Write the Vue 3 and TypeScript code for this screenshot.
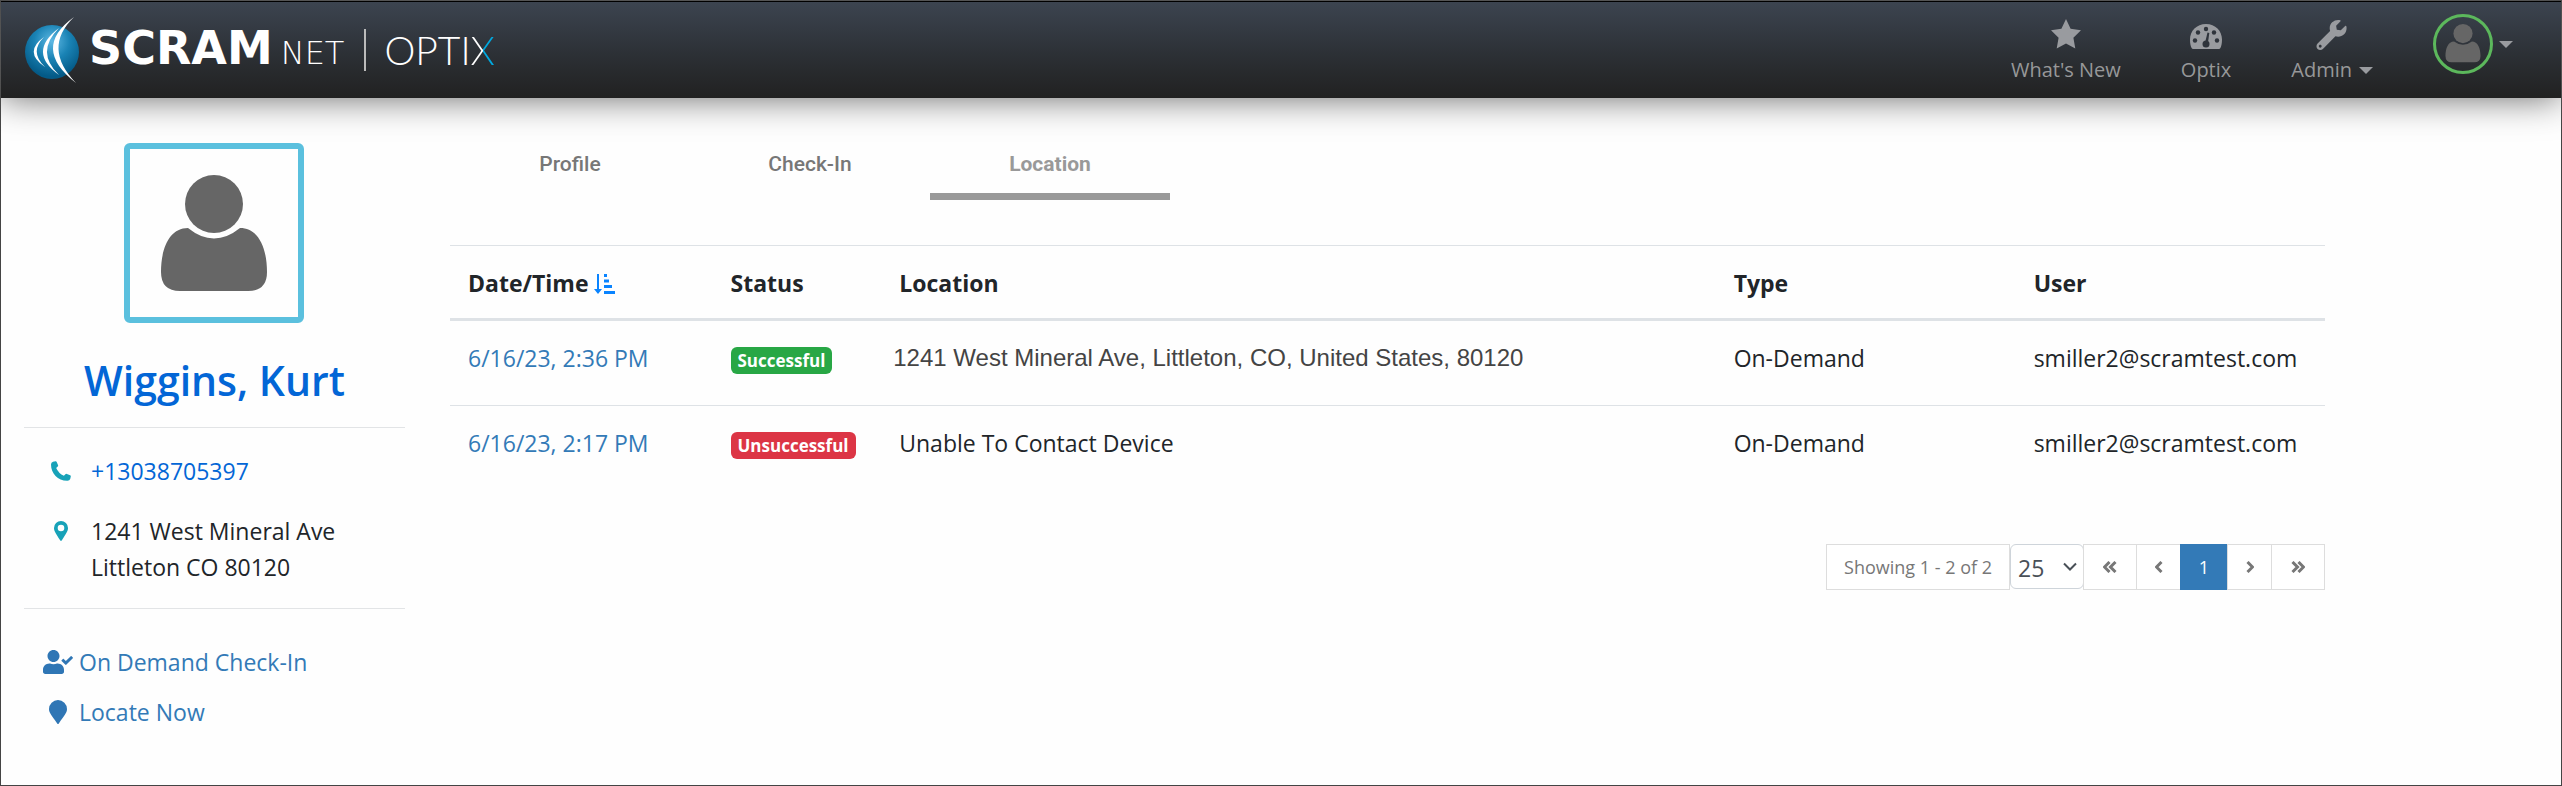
<script setup lang="ts">
import { ref } from 'vue'

interface CheckRow {
  when: string
  ok: boolean
  location: string
  type: string
  user: string
}

const tabs: string[] = ['Profile', 'Check-In', 'Location']
const activeTab = ref<string>('Location')
const pageSize = ref<string>('25')
const rows: CheckRow[] = [
  { when: '6/16/23, 2:36 PM', ok: true, location: '1241 West Mineral Ave, Littleton, CO, United States, 80120', type: 'On-Demand', user: 'smiller2@scramtest.com' },
  { when: '6/16/23, 2:17 PM', ok: false, location: 'Unable To Contact Device', type: 'On-Demand', user: 'smiller2@scramtest.com' },
]
</script>

<template>
  <div class="page">
    <header class="topbar">
      <a class="brand" href="#" aria-label="SCRAMNET Optix home">
        <svg class="globe" viewBox="0 0 54 72" aria-hidden="true">
          <defs>
            <radialGradient id="globeFill" cx="0.5" cy="0.3" r="0.65">
              <stop offset="0" stop-color="#5fb9e4" />
              <stop offset="0.5" stop-color="#1a83b5" />
              <stop offset="1" stop-color="#045a87" />
            </radialGradient>
          </defs>
          <circle cx="27" cy="38" r="27" fill="url(#globeFill)" />
          <path d="M19 23Q-2 38 20 53Q4 38 19 23z" fill="#fff" />
          <path d="M34 14Q2 38 34 61Q10 38 34 14z" fill="#fff" />
          <path d="M49 3Q6 34 51 69Q17 34 49 3z" fill="#fff" />
        </svg>
        <span class="brand-name"><span class="scram">SCRAM</span><span class="net">NET</span></span>
        <span class="brand-rule"></span>
        <span class="optix">OPTI<span class="optix-x">X</span></span>
      </a>
      <nav class="menu" aria-label="Main">
        <a class="menu-item" href="#">
          <svg width="32" height="32" viewBox="0 0 32 32" aria-hidden="true"><path d="M16 1l4.600 9.800 10.400 1.500-7.600 7.500 1.900 10.700L16 25.400l-9.300 5.100 1.900-10.700L1 12.300l10.400-1.500z" /></svg>
          <span>What's New</span>
        </a>
        <a class="menu-item" href="#">
          <svg width="34" height="32" viewBox="0 0 34 32" aria-hidden="true"><path d="M17 6C7.600 6 1 13 1 21.500c0 4 .6 6.500 1.600 8.500q.5 1 1.500 1h25.800q1 0 1.500-1c1-2 1.600-4.500 1.600-8.500C33 13 26.400 6 17 6z" /><g class="holes"><circle cx="17" cy="11" r="2.200" /><circle cx="9" cy="14.500" r="2.200" /><circle cx="25" cy="14.500" r="2.200" /><circle cx="6" cy="22.500" r="2.200" /><circle cx="28" cy="22.500" r="2.200" /><circle cx="17" cy="26" r="3.500" /><path d="M16 25l2.500-10.500 1.800.4-1.500 11z" /></g></svg>
          <span>Optix</span>
        </a>
        <button class="menu-item" type="button">
          <svg width="32" height="32" viewBox="0 -32 528 544" aria-hidden="true"><path d="M507.730 109.100c-2.240-9.030-13.540-12.090-20.120-5.510l-74.360 74.360-67.880-11.310-11.310-67.880 74.360-74.360c6.620-6.620 3.430-17.900-5.660-20.160-47.380-11.740-99.550.91-136.580 37.930-39.640 39.640-50.550 97.100-34.050 147.200L18.740 402.760c-24.990 24.990-24.990 65.510 0 90.500 24.990 24.990 65.510 24.990 90.500 0l213.210-213.210c50.120 16.710 107.470 5.680 147.370-34.220 37.070-37.070 49.700-89.320 37.910-136.730zM64 472c-13.250 0-24-10.750-24-24 0-13.260 10.750-24 24-24s24 10.740 24 24c0 13.250-10.750 24-24 24z" /></svg>
          <span class="with-caret">Admin <i class="caret"></i></span>
        </button>
        <button class="account" type="button" aria-label="Account">
          <span class="account-ring">
            <svg width="36" height="40" viewBox="0 0 106 121" aria-hidden="true"><circle cx="53" cy="29" r="29" /><path d="M26 53q27 20 54 0C98 53 106 74 106 97q0 19-19 19H19Q0 116 0 97C0 74 8 53 26 53z" /></svg>
          </span>
          <i class="caret"></i>
        </button>
      </nav>
    </header>

    <div class="body">
      <aside class="side">
        <div class="portrait">
          <svg width="106" height="116" viewBox="0 0 106 116" role="img" aria-label="No photo"><circle cx="53" cy="29" r="29" /><path d="M27 53q26 21 52 0C98 53 106 74 106 97q0 19-19 19H19Q0 116 0 97C0 74 8 53 27 53z" /></svg>
        </div>
        <h1><a href="#">Wiggins, Kurt</a></h1>
        <ul class="contact">
          <li>
            <svg width="20" height="20" viewBox="0 0 20 20" aria-hidden="true"><path d="M2 .7L4.400.2Q5.300 0 5.700.9L7.100 4.200Q7.400 5 6.700 5.600L5.200 6.900Q7.500 12.200 12.900 14.800L14.400 13.200Q15 12.500 15.900 12.900L19.100 14.300Q20 14.700 19.800 15.600L19.200 18Q18.600 19.800 16.500 19.800C7 20 0 12.500 0 3.500Q0 1.200 2 .7z" /></svg>
            <a href="#">+13038705397</a>
          </li>
          <li>
            <svg width="20" height="20" viewBox="0 0 20 20" aria-hidden="true"><path fill-rule="evenodd" d="M10 0a7 7 0 0 1 7 7c0 3-1.500 5-6.300 12.600q-.7.800-1.400 0C4.500 12 3 10 3 7a7 7 0 0 1 7-7zm0 3.700a3.300 3.300 0 1 0 0 6.600 3.300 3.300 0 0 0 0-6.600z" /></svg>
            <address>1241 West Mineral Ave<br>Littleton CO 80120</address>
          </li>
        </ul>
        <ul class="actions">
          <li>
            <a href="#">
              <svg width="30" height="24" viewBox="0 0 640 512" aria-hidden="true"><path d="M224 256c70.700 0 128-57.300 128-128S294.700 0 224 0 96 57.300 96 128s57.300 128 128 128zm89.600 32h-16.700c-22.200 10.200-46.900 16-72.900 16s-50.600-5.800-72.900-16h-16.700C60.200 288 0 348.200 0 422.400V464c0 26.500 21.500 48 48 48h352c26.500 0 48-21.500 48-48v-41.600c0-74.200-60.200-134.400-134.400-134.400zm323-128.400l-27.800-28.100c-4.600-4.700-12.100-4.700-16.800-.1l-104.800 104-45.500-45.800c-4.600-4.700-12.100-4.700-16.800-.1l-28.100 27.900c-4.700 4.600-4.700 12.100-.1 16.800l81.700 82.300c4.600 4.700 12.100 4.700 16.800.1l141.300-140.200c4.600-4.700 4.700-12.200.1-16.800z" /></svg>
              On Demand Check-In
            </a>
          </li>
          <li>
            <a href="#">
              <svg width="30" height="24" viewBox="0 0 30 24" aria-hidden="true"><path d="M15 0a9 9 0 0 1 9 9c0 4-2.500 6-8.200 14.500q-.8 1-1.600 0C8.500 15 6 13 6 9a9 9 0 0 1 9-9z" /></svg>
              Locate Now
            </a>
          </li>
        </ul>
      </aside>

      <main class="main">
        <div class="tabs" role="tablist">
          <button v-for="t in tabs" :key="t" type="button" role="tab" class="tab" :class="{ active: t === activeTab }" :aria-selected="t === activeTab" @click="activeTab = t">{{ t }}</button>
        </div>

        <table class="log">
          <thead>
            <tr>
              <th class="c-date">
                Date/Time
                <svg class="sort" width="21" height="20" viewBox="0 0 21 20" aria-hidden="true"><path d="M3 0h2v15h3l-4 5-4-5h3zM10 0h3v3h-3zM10 5.500h5v3h-5zM10 11h8v3h-8zM10 17h11v3h-11z" /></svg>
              </th>
              <th class="c-status">Status</th>
              <th class="c-place">Location</th>
              <th class="c-type">Type</th>
              <th class="c-user">User</th>
            </tr>
          </thead>
          <tbody>
            <tr v-for="r in rows" :key="r.when">
              <td><a href="#">{{ r.when }}</a></td>
              <td><span class="badge" :class="r.ok ? 'good' : 'bad'">{{ r.ok ? 'Successful' : 'Unsuccessful' }}</span></td>
              <td :class="{ street: r.ok }">{{ r.location }}</td>
              <td>{{ r.type }}</td>
              <td>{{ r.user }}</td>
            </tr>
          </tbody>
        </table>

        <nav class="pager" aria-label="Pages">
          <span class="showing">Showing 1 - 2 of 2</span>
          <span class="size">
            <select v-model="pageSize" aria-label="Rows per page">
              <option>25</option>
              <option>50</option>
            </select>
            <svg width="14" height="10" viewBox="0 0 14 10" aria-hidden="true"><path d="M1 1.500l6 6 6-6" /></svg>
          </span>
          <button class="wide" type="button" aria-label="First page"><svg width="14" height="12" viewBox="0 0 14 12" aria-hidden="true"><path d="M6.500 1l-5 5 5 5M12.500 1l-5 5 5 5" /></svg></button>
          <button type="button" aria-label="Previous page"><svg width="8" height="12" viewBox="0 0 8 12" aria-hidden="true"><path d="M6.500 1l-5 5 5 5" /></svg></button>
          <button class="current" type="button" aria-current="page">1</button>
          <button type="button" aria-label="Next page"><svg width="8" height="12" viewBox="0 0 8 12" aria-hidden="true"><path d="M1.500 1l5 5-5 5" /></svg></button>
          <button class="wide" type="button" aria-label="Last page"><svg width="14" height="12" viewBox="0 0 14 12" aria-hidden="true"><path d="M1.500 1l5 5-5 5M7.500 1l5 5-5 5" /></svg></button>
        </nav>
      </main>
    </div>
  </div>
</template>

<style>
body {
  margin: 0;
  background: #fefefe;
}
</style>

<style scoped>
* {
  box-sizing: border-box;
}
.page {
  min-height: 100vh;
  border: 1px solid #444;
  font-family: "Open Sans", "Noto Sans", sans-serif;
  font-size: 23px;
  line-height: 36px;
  color: #212529;
}
a {
  color: #337ab7;
  text-decoration: none;
}
button {
  font: inherit;
  cursor: pointer;
}
ul {
  list-style: none;
  margin: 0;
  padding: 0;
}
.topbar {
  display: flex;
  align-items: center;
  justify-content: space-between;
  height: 97px;
  padding: 0 48px 0 24px;
  border-top: 1px solid #000;
  background: linear-gradient(#3c4450, #2c3035 55%, #212121);
  box-shadow: 0 0 36px #666;
}
.brand {
  display: flex;
  align-items: center;
  color: #fff;
}
.globe {
  width: 54px;
  height: 72px;
  margin-right: 10px;
}
.brand-name {
  display: flex;
  align-items: baseline;
  gap: 8px;
  line-height: 48px;
}
.scram {
  font-family: "DejaVu Sans", sans-serif;
  font-size: 46px;
  font-weight: 700;
}
.net {
  font-family: "DejaVu Sans", sans-serif;
  font-size: 32px;
  font-weight: 200;
}
.brand-rule {
  width: 2px;
  height: 42px;
  margin: 0 18px 0 20px;
  background: #bbb;
}
.optix {
  font-family: Lato, sans-serif;
  font-size: 39px;
  font-weight: 300;
  line-height: 48px;
}
.optix-x {
  color: transparent;
  background: linear-gradient(90deg, #fff 50%, #00a9e0 50%);
  background-clip: text;
  -webkit-background-clip: text;
}
.menu {
  display: flex;
  height: 96px;
}
.menu-item {
  display: flex;
  flex-direction: column;
  align-items: center;
  padding: 16px 30px 0;
  border: 0;
  background: none;
  color: #979899;
  font-size: 20px;
  line-height: 40px;
}
.menu-item svg {
  display: block;
  fill: #999b9f;
}
.menu-item .holes {
  fill: #2f343b;
}
.caret {
  display: inline-block;
  border: 7px solid transparent;
  border-top-color: #999b9f;
  border-bottom: 0;
}
.with-caret {
  display: flex;
  align-items: center;
  gap: 7px;
}
.account {
  display: flex;
  align-items: center;
  gap: 6px;
  align-self: flex-start;
  margin: 12px 0 0 30px;
  padding: 0;
  border: 0;
  background: none;
}
.account-ring {
  display: grid;
  place-items: center;
  width: 60px;
  height: 60px;
  border: 3px solid #5cb85c;
  border-radius: 50%;
}
.account svg,
.portrait svg {
  fill: #666;
}
.body {
  display: flex;
  padding: 45px 236px 48px 23px;
}
.side {
  flex: none;
  width: 381px;
  margin-right: 45px;
}
.portrait {
  display: grid;
  place-items: center;
  width: 180px;
  height: 180px;
  margin: 0 0 0 100px;
  border: 6px solid #5bc0de;
  border-radius: 6px;
}
h1 {
  margin: 30px 0 20px;
  font-size: 41px;
  font-weight: 600;
  line-height: 54px;
  text-align: center;
}
h1 a,
.contact a {
  color: #0366d6;
}
.contact {
  padding: 25px 0 23px 27px;
  border: solid #e2e4e6;
  border-width: 1px 0;
}
.contact li {
  display: flex;
  gap: 20px;
}
.contact li + li {
  margin-top: 24px;
}
.contact svg {
  flex: none;
  margin-top: 8px;
  fill: #17a2b8;
}
address {
  font-style: normal;
}
.actions {
  padding: 35px 0 0 19px;
}
.actions li + li {
  margin-top: 14px;
}
.actions a {
  display: flex;
  align-items: center;
  gap: 6px;
}
.actions svg {
  fill: #2f76b5;
}
.main {
  flex: 1;
  min-width: 0;
}
.tabs {
  display: flex;
}
.tab {
  width: 240px;
  height: 57px;
  padding: 0 0 9px;
  border: 0;
  border-bottom: 7px solid transparent;
  background: none;
  font-family: Roboto, sans-serif;
  font-size: 21px;
  font-weight: 500;
  line-height: 36px;
  color: #777;
}
.tab.active {
  border-bottom-color: #999;
  color: #999;
  font-weight: 700;
}
.log {
  width: 100%;
  margin-top: 45px;
  border-top: 1px solid #dee2e6;
  border-spacing: 0;
  table-layout: fixed;
}
th,
td {
  padding: 19px 18px 17px;
  text-align: left;
  vertical-align: top;
}
th {
  border-bottom: 3px solid #dee2e6;
  font-weight: 700;
}
td {
  padding: 19px 18px 29px;
}
tr + tr td {
  border-top: 1px solid #dee2e6;
}
.c-date { width: 14%; }
.c-status { width: 9%; }
.c-place { width: 44.5%; }
.c-type { width: 16%; }
.sort {
  fill: #0a84ff;
  vertical-align: -2px;
}
.street {
  padding-left: 12px;
  font-family: "Liberation Sans", Arial, sans-serif;
  font-size: 24px;
  color: #444;
}
.badge {
  display: inline-block;
  padding: 0 7px;
  border-radius: 6px;
  color: #fff;
  font-size: 17px;
  font-weight: 700;
  line-height: 27px;
}
.good { background: #28a745; }
.bad { background: #dc3545; }
.pager {
  display: flex;
  justify-content: flex-end;
  margin-top: 54px;
  font-size: 18px;
}
.showing,
.pager button {
  display: grid;
  place-items: center;
  height: 46px;
  border: 1px solid #ddd;
  background: #fff;
  color: #777;
}
.showing {
  padding: 0 17px;
}
.size {
  display: grid;
  align-items: center;
  width: 74px;
  height: 45px;
}
.size select,
.size svg {
  grid-area: 1 / 1;
}
.size select {
  width: 100%;
  height: 45px;
  padding: 2px 0 0 7px;
  border: 1px solid #ced4da;
  border-radius: 6px;
  appearance: none;
  background: #fff;
  font: inherit;
  font-size: 23px;
  color: #495057;
}
.size svg {
  justify-self: end;
  margin-right: 7px;
  fill: none;
  stroke: #495057;
  stroke-width: 2;
  pointer-events: none;
}
.pager button {
  width: 45px;
  margin-left: -1px;
  padding: 0;
}
.pager button.wide {
  width: 54px;
}
.pager button.current {
  width: 48px;
  border-color: #337ab7;
  background: #337ab7;
  color: #fff;
}
.pager button svg {
  fill: none;
  stroke: #777;
  stroke-width: 3;
}
</style>
